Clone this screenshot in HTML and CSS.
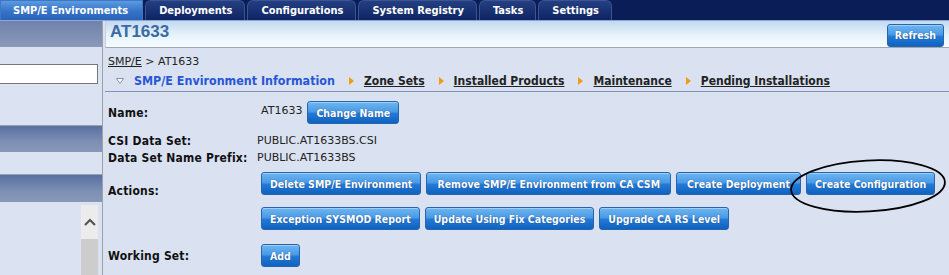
FILE: index.html
```html
<!DOCTYPE html>
<html>
<head>
<meta charset="utf-8">
<link rel="stylesheet" href="styles.css">
</head>
<body>
<div class="tabbar">
  <div class="tab active">SMP/E Environments</div>
  <div class="tab">Deployments</div>
  <div class="tab">Configurations</div>
  <div class="tab">System Registry</div>
  <div class="tab">Tasks</div>
  <div class="tab">Settings</div>
</div>
<div class="layout">
  <aside class="sidebar">
    <div class="side-head first"></div>
    <div class="side-body one"><div class="side-input"></div></div>
    <div class="side-head"></div>
    <div class="side-body two"></div>
    <div class="side-head third"></div>
    <div class="side-body three">
      <div class="scrollbar">
        <div class="scroll-up"><svg width="12" height="8" viewBox="0 0 12 8"><path d="M1 7 L6 2 L11 7" fill="none" stroke="#555" stroke-width="2.2"/></svg></div>
        <div class="scroll-thumb"></div>
      </div>
    </div>
  </aside>
  <main class="main">
    <div class="main-head">
      <span class="title">AT1633</span>
      <button class="btn">Refresh</button>
    </div>
    <div class="crumb"><span class="u">SMP/E</span> &gt; AT1633</div>
    <nav class="subnav">
      <svg class="down" width="8" height="6" viewBox="0 0 8 6"><path d="M0.5 0.5 H7.5 L4 5.5 Z" fill="#fff" stroke="#8a90a8" stroke-width="1"/></svg>
      <span class="current">SMP/E Environment Information</span>
      <span class="arrow"></span><span class="link">Zone Sets</span>
      <span class="arrow"></span><span class="link">Installed Products</span>
      <span class="arrow"></span><span class="link">Maintenance</span>
      <span class="arrow"></span><span class="link">Pending Installations</span>
    </nav>
    <div class="form">
      <div class="label">Name:</div>
      <div class="value name-value"><span class="nv">AT1633</span><button class="btn">Change Name</button></div>
      <div class="label csi">CSI Data Set:</div>
      <div class="value plain csi">PUBLIC.AT1633BS.CSI</div>
      <div class="label">Data Set Name Prefix:</div>
      <div class="value plain">PUBLIC.AT1633BS</div>
      <div class="label actions-label">Actions:</div>
      <div class="value buttons">
        <div class="btn-row">
          <button class="btn">Delete SMP/E Environment</button>
          <button class="btn wide">Remove SMP/E Environment from CA CSM</button>
          <button class="btn deploy">Create Deployment</button>
          <button class="btn config">Create Configuration</button>
        </div>
        <div class="btn-row">
          <button class="btn">Exception SYSMOD Report</button>
          <button class="btn">Update Using Fix Categories</button>
          <button class="btn">Upgrade CA RS Level</button>
        </div>
      </div>
      <div class="label ws-label">Working Set:</div>
      <div class="value ws"><button class="btn">Add</button></div>
    </div>
  </main>
</div>
<svg class="circle" width="170" height="62" viewBox="0 0 170 62"><ellipse cx="85" cy="31" rx="77" ry="25.5" transform="rotate(-3 85 31)" fill="none" stroke="#000" stroke-width="1.8"/></svg>
</body>
</html>
```
FILE: styles.css
```css
* { box-sizing: border-box; }
html, body { margin: 0; padding: 0; }
body {
  width: 949px;
  height: 275px;
  overflow: hidden;
  background: #dae2f2;
  font-family: "DejaVu Sans Condensed", "DejaVu Sans", sans-serif;
  color: #111;
  position: relative;
}
.tabbar {
  height: 21px;
  background: #0b1d56;
  display: flex;
  align-items: flex-end;
  gap: 2px;
  border-bottom: 1px solid #8aa6d8;
}
.tab {
  height: 20px;
  padding: 0 12px 0 13px;
  color: #fff;
  font-weight: bold;
  font-size: 11px;
  line-height: 19px;
  border: 1px solid #3a5592;
  border-bottom: none;
  border-radius: 6px 6px 0 0;
  background: linear-gradient(#243f82, #0e2463);
}
.tab.active {
  border-radius: 0;
  border-color: #3c78c8;
  background: linear-gradient(#5c9ae0, #3573c8 55%, #2a63b8);
  padding: 0 14px 0 12px;
}
.layout {
  display: flex;
  height: 254px;
}
.sidebar {
  width: 103px;
  border-right: 1px solid #9aa0ac;
  background: #dbe3f3;
  display: flex;
  flex-direction: column;
}
.side-head {
  height: 27px;
  background: linear-gradient(#5870a0, #7d8fb4 60%, #8898b8);
}
.side-head.first {
  background: linear-gradient(#6f82aa, #8a9aba);
}
.side-head.third { height: 28px; }
.side-body { border-bottom: 1px solid #9aa0ac; }
.side-body.one { height: 80px; padding-top: 17px; }
.side-body.two { height: 23px; }
.side-body.three { flex: 1; border-bottom: none; padding: 3px 0 0 81px; }
.side-input {
  width: 98px;
  height: 20px;
  background: #fff;
  border: 1px solid #777;
  border-left: none;
}
.scrollbar { width: 17px; height: 70px; background: #cdcdcd; }
.scroll-up {
  height: 34px;
  background: #ececec;
  display: flex;
  align-items: center;
  justify-content: center;
}
.main {
  flex: 1;
  margin-left: 2px;
}
.main-head {
  height: 27px;
  border-bottom: 1px solid #a2a6ae;
  border-left: 1px solid #c8d0dc;
  background: linear-gradient(#c3d9ef, #e6f3fb 55%, #f6fcff);
  display: flex;
  align-items: center;
  justify-content: space-between;
  padding: 0 5px 0 4px;
}
.title {
  font-family: "Liberation Sans", Arial, sans-serif;
  font-weight: bold;
  font-size: 17px;
  color: #3a6aa3;
  margin-top: -4px;
}
.btn {
  font-family: "DejaVu Sans Condensed", "DejaVu Sans", sans-serif;
  font-weight: bold;
  font-size: 10.5px;
  color: #fff;
  height: 23px;
  padding: 0 8px;
  border: 1px solid #2664ad;
  border-radius: 3px;
  background: linear-gradient(#6db6f0, #4a9ae6 45%, #2479d6 55%, #0f63c0);
  text-shadow: 0 0 1px rgba(0,0,40,0.5);
  box-shadow: inset 0 1px 0 rgba(255,255,255,0.35);
  white-space: nowrap;
  cursor: pointer;
}
.btn.wide { padding: 0 10px; }
.btn.deploy { padding: 0 10px; }
.main-head .btn { margin-top: 2px; padding: 0 7px; font-size: 10.5px; }
.crumb {
  font-family: "DejaVu Sans", sans-serif;
  font-size: 11px;
  color: #222;
  padding: 7px 0 0 3px;
  height: 24px;
}
.u { text-decoration: underline; }
.subnav {
  display: flex;
  align-items: center;
  height: 20px;
  border-bottom: 1px solid #8790b6;
  font-size: 12.4px;
  font-weight: bold;
  padding-left: 11px;
  padding-bottom: 2px;
}
.down { margin-right: 10px; }
.current { color: #2757d5; }
.link { color: #222; text-decoration: underline; font-size: 12px; }
.arrow {
  width: 0; height: 0;
  border-left: 5px solid #f29a10;
  border-top: 4px solid transparent;
  border-bottom: 4px solid transparent;
  margin: 0 10px 0 14px;
}
.form {
  display: grid;
  grid-template-columns: 149px 1fr;
  padding: 8px 0 0 3px;
  align-items: center;
}
.label { font-size: 12px; font-weight: bold; color: #111; letter-spacing: 0.2px; }
.value { font-family: "DejaVu Sans", sans-serif; font-size: 11px; color: #222; }
.name-value { display: flex; align-items: flex-start; padding-left: 4px; height: 26px; padding-top: 1px; }
.nv { margin-top: 3px; margin-right: 5px; }
.plain { height: 17px; line-height: 17px; }
.csi { margin-top: 6px; }
.buttons { padding-left: 4px; padding-top: 6px; display: flex; flex-direction: column; gap: 12px; }
.btn-row { display: flex; gap: 5px; }
.actions-label { align-self: start; padding-top: 18px; }
.ws { padding-left: 4px; padding-top: 14px; }
.ws-label { padding-top: 14px; }
.circle {
  position: absolute;
  left: 783px;
  top: 155px;
}
```
